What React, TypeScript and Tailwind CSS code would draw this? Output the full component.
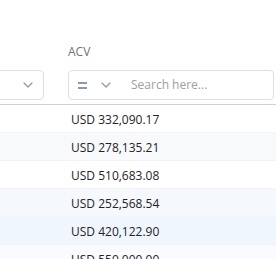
import React from "react";

const Chevron = ({ className }: { className?: string }) => (
  <svg className={className} width="10" height="6" viewBox="0 0 10 6" fill="none">
    <path d="M1 1l4 4 4-4" stroke="#8f98a8" strokeWidth="1.2" strokeLinecap="round" strokeLinejoin="round" />
  </svg>
);

const rows = [
  { v: "USD 332,090.17", bg: "bg-white" },
  { v: "USD 278,135.21", bg: "bg-[#f8f9fa]" },
  { v: "USD 510,683.08", bg: "bg-white" },
  { v: "USD 252,568.54", bg: "bg-[#f5f8fc]" },
  { v: "USD 420,122.90", bg: "bg-[#f0f6fe]" },
  { v: "USD 550,000.00", bg: "bg-[#f9fbfe]" },
];

export default function App() {
  return (
    <div className="w-[276px] h-[259px] overflow-hidden bg-white font-['Open_Sans',sans-serif] text-[12px]">
      <div className="flex border-b border-[#cfd1d4]">
        <div className="w-[60px] shrink-0 pt-[70px] pb-[4px]">
          <div className="ml-[-10px] w-[54px] h-[30px] rounded-[4px] border border-[#dcdfe3] flex items-center justify-end pr-[10px]">
            <Chevron />
          </div>
        </div>
        <div className="flex-1 pl-[8px] pr-[2px] pt-[44px] pb-[4px]">
          <div className="h-[16px] leading-[16px] text-[#6f747a]">ACV</div>
          <div className="mt-[10px] h-[30px] rounded-[4px] border border-[#dcdfe3] flex items-center pl-[9px]">
            <div className="flex flex-col gap-[3px] w-[9px]">
              <div className="h-[2px] bg-[#8f98a8]" />
              <div className="h-[2px] bg-[#8f98a8]" />
            </div>
            <Chevron className="ml-[14px]" />
            <span className="ml-[20px] text-[#9aa0a6] leading-[16px]">Search here...</span>
          </div>
        </div>
      </div>
      {rows.map((r, i) => (
        <div key={i} className={`flex h-[28px] items-center ${r.bg} border-b border-[#f2f3f5]`}>
          <div className="w-[60px] shrink-0" />
          <div className="pl-[11px] pt-[2px] text-[#1f2328]">{r.v}</div>
        </div>
      ))}
    </div>
  );
}
